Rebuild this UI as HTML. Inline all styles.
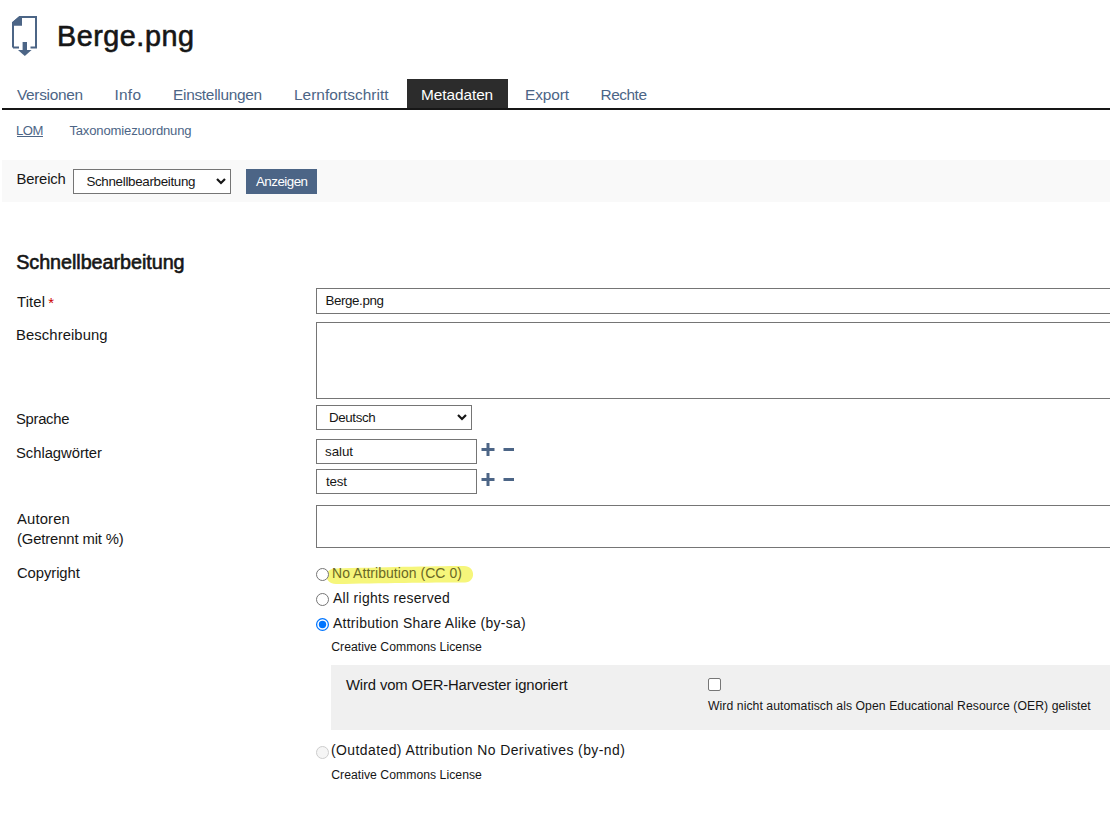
<!DOCTYPE html>
<html><head><meta charset="utf-8">
<style>
html,body{margin:0;padding:0;background:#fff;width:1110px;height:816px;overflow:hidden;position:relative;font-family:"Liberation Sans",sans-serif;}
.t{position:absolute;white-space:nowrap;line-height:40px;height:40px;}
.b{position:absolute;box-sizing:border-box;}
#h1{left:57.00px;top:15.72px;font-size:28.78px;letter-spacing:0.523px;font-weight:400;color:#161616}
#t1{left:17.00px;top:74.66px;font-size:15.41px;letter-spacing:-0.322px;font-weight:400;color:#4c6586}
#t2{left:114.40px;top:74.66px;font-size:15.41px;letter-spacing:0.288px;font-weight:400;color:#4c6586}
#t3{left:173.00px;top:74.66px;font-size:15.41px;letter-spacing:-0.278px;font-weight:400;color:#4c6586}
#t4{left:294.00px;top:74.66px;font-size:15.41px;letter-spacing:0.026px;font-weight:400;color:#4c6586}
#t5{left:421.00px;top:74.66px;font-size:15.41px;letter-spacing:-0.077px;font-weight:400;color:#ffffff}
#t6{left:525.00px;top:74.66px;font-size:15.41px;letter-spacing:-0.107px;font-weight:400;color:#4c6586}
#t7{left:600.60px;top:74.66px;font-size:15.41px;letter-spacing:-0.490px;font-weight:400;color:#4c6586}
#s1{left:16.00px;top:111.47px;font-size:13.08px;letter-spacing:-0.459px;font-weight:400;color:#4c6586}
#s2{left:69.40px;top:111.47px;font-size:13.08px;letter-spacing:-0.167px;font-weight:400;color:#4c6586}
#bereich{left:16.40px;top:159.26px;font-size:14.83px;letter-spacing:-0.146px;font-weight:400;color:#161616}
#selt{left:86.40px;top:162.36px;font-size:13.37px;letter-spacing:-0.309px;font-weight:400;color:#161616}
#btnt{left:256.00px;top:162.26px;font-size:13.37px;letter-spacing:-0.536px;font-weight:400;color:#ffffff}
#h2{left:16.20px;top:242.45px;font-size:19.77px;letter-spacing:-0.049px;font-weight:400;color:#161616}
#l1{left:17.00px;top:281.56px;font-size:14.83px;letter-spacing:0.141px;font-weight:400;color:#161616}
#ast{left:48.20px;top:282.56px;font-size:14.83px;letter-spacing:0.000px;font-weight:400;color:#cc0000}
#l2{left:16.00px;top:315.36px;font-size:14.83px;letter-spacing:0.083px;font-weight:400;color:#161616}
#l3{left:16.00px;top:398.56px;font-size:14.83px;letter-spacing:-0.307px;font-weight:400;color:#161616}
#l4{left:16.00px;top:432.56px;font-size:14.83px;letter-spacing:-0.048px;font-weight:400;color:#161616}
#l5{left:17.00px;top:498.76px;font-size:14.83px;letter-spacing:0.137px;font-weight:400;color:#161616}
#l6{left:17.00px;top:518.56px;font-size:14.83px;letter-spacing:-0.132px;font-weight:400;color:#161616}
#l7{left:17.00px;top:552.86px;font-size:14.83px;letter-spacing:-0.084px;font-weight:400;color:#161616}
#i1{left:325.40px;top:281.16px;font-size:13.37px;letter-spacing:-0.388px;font-weight:400;color:#161616}
#i2{left:329.00px;top:398.06px;font-size:13.37px;letter-spacing:-0.378px;font-weight:400;color:#161616}
#i3{left:325.00px;top:431.76px;font-size:13.37px;letter-spacing:-0.053px;font-weight:400;color:#161616}
#i4{left:326.00px;top:461.76px;font-size:13.37px;letter-spacing:-0.175px;font-weight:400;color:#161616}
#r1{left:332.00px;top:552.66px;font-size:13.95px;letter-spacing:0.066px;font-weight:400;color:#6a6825}
#r2{left:333.00px;top:578.16px;font-size:13.95px;letter-spacing:0.296px;font-weight:400;color:#161616}
#r3{left:333.00px;top:602.76px;font-size:13.95px;letter-spacing:0.275px;font-weight:400;color:#161616}
#c1{left:331.20px;top:626.57px;font-size:12.21px;letter-spacing:0.035px;font-weight:400;color:#161616}
#oer1{left:346.00px;top:665.06px;font-size:14.83px;letter-spacing:-0.135px;font-weight:400;color:#161616}
#oer2{left:708.00px;top:685.67px;font-size:12.21px;letter-spacing:0.065px;font-weight:400;color:#161616}
#r4{left:331.00px;top:730.46px;font-size:13.95px;letter-spacing:0.427px;font-weight:400;color:#161616}
#c2{left:331.20px;top:755.37px;font-size:12.21px;letter-spacing:0.035px;font-weight:400;color:#161616}
#h1,#h2{-webkit-text-stroke:0.6px #161616;}
</style></head><body>
<!-- header icon -->
<svg class="b" style="left:0;top:0" width="60" height="70" viewBox="0 0 60 70">
  <path d="M13 47.5 V22.8 L19.8 17 H36 V47.5 H30.5 M13 47.5 H19" fill="none" stroke="#4c6586" stroke-width="2"/>
  <path d="M12 22.5 L19.5 16 H22 V25.8 H12 Z" fill="#4c6586"/>
  <rect x="22.6" y="42" width="4.4" height="8" fill="#4c6586"/>
  <path d="M18 50 H31.6 L24.8 56 Z" fill="#4c6586"/>
</svg>
<!-- tabs -->
<div class="b" style="left:17px;top:136px;width:26px;height:1px;background:#4c6586"></div>
<div class="b" style="left:407px;top:79px;width:101px;height:30px;background:#2c2c2c"></div>
<div class="b" style="left:2px;top:108px;width:1108px;height:2px;background:#161616"></div>
<!-- filter bar -->
<div class="b" style="left:2px;top:160px;width:1108px;height:42px;background:#f9f9f9"></div>
<div class="b" style="left:73px;top:169px;width:158px;height:25px;background:#fff;border:1px solid #757575"></div>
<svg class="b" style="left:215px;top:177px" width="12" height="9" viewBox="0 0 12 9"><path d="M2 2 L6 6 L10 2" fill="none" stroke="#161616" stroke-width="2.2"/></svg>
<div class="b" style="left:246px;top:169px;width:71px;height:25px;background:#4c6586"></div>
<!-- form fields -->
<div class="b" style="left:316px;top:288px;width:820px;height:26px;border:1px solid #757575"></div>
<div class="b" style="left:316px;top:322px;width:820px;height:77px;border:1px solid #757575"></div>
<div class="b" style="left:316px;top:405px;width:156px;height:25px;border:1px solid #757575"></div>
<svg class="b" style="left:456px;top:413px" width="12" height="9" viewBox="0 0 12 9"><path d="M2 2 L6 6 L10 2" fill="none" stroke="#161616" stroke-width="2.2"/></svg>
<div class="b" style="left:316px;top:439px;width:161px;height:25px;border:1px solid #757575"></div>
<div class="b" style="left:316px;top:469px;width:161px;height:25px;border:1px solid #757575"></div>
<svg class="b" style="left:480px;top:442px" width="36" height="16"><path d="M1.5 7.5 H14.5 M8 1 V14 M23.5 7.5 H34" stroke="#4c6586" stroke-width="3"/></svg>
<svg class="b" style="left:480px;top:472px" width="36" height="16"><path d="M1.5 7.5 H14.5 M8 1 V14 M23.5 7.5 H34" stroke="#4c6586" stroke-width="3"/></svg>
<div class="b" style="left:316px;top:505px;width:820px;height:43px;border:1px solid #757575"></div>
<!-- copyright -->
<svg class="b" style="left:0;top:0" width="500" height="600" viewBox="0 0 500 600"><path d="M335 568.6 C380 567.2 430 566.2 464 566 C476 566 476 582.4 465 582.4 C430 582.4 380 583 336 584 C323.5 584 323.5 568.6 335 568.6 Z" fill="#f6f67b"/></svg>
<div class="b" style="left:316px;top:568px;width:13px;height:13px;border:1px solid #767676;border-radius:50%;background:#fff"></div>
<div class="b" style="left:316px;top:593px;width:13px;height:13px;border:1px solid #767676;border-radius:50%;background:#fff"></div>
<svg class="b" style="left:310px;top:612px" width="26" height="26" viewBox="0 0 26 26"><circle cx="12.5" cy="12.5" r="5.9" fill="#fff" stroke="#0075ff" stroke-width="1.25"/><circle cx="12.5" cy="12.5" r="3.7" fill="#0075ff"/></svg>
<div class="b" style="left:331px;top:665px;width:779px;height:65px;background:#f0f0f0"></div>
<div class="b" style="left:708px;top:678px;width:13px;height:13px;border:1px solid #767676;border-radius:2px;background:#fff"></div>
<div class="b" style="left:316px;top:746px;width:13px;height:13px;border:1px solid #cdcdcd;border-radius:50%;background:#f5f5f5"></div>
<div class="t" id="h1">Berge.png</div>
<div class="t" id="t1">Versionen</div>
<div class="t" id="t2">Info</div>
<div class="t" id="t3">Einstellungen</div>
<div class="t" id="t4">Lernfortschritt</div>
<div class="t" id="t5">Metadaten</div>
<div class="t" id="t6">Export</div>
<div class="t" id="t7">Rechte</div>
<div class="t" id="s1">LOM</div>
<div class="t" id="s2">Taxonomiezuordnung</div>
<div class="t" id="bereich">Bereich</div>
<div class="t" id="selt">Schnellbearbeitung</div>
<div class="t" id="btnt">Anzeigen</div>
<div class="t" id="h2">Schnellbearbeitung</div>
<div class="t" id="l1">Titel</div>
<div class="t" id="ast">*</div>
<div class="t" id="l2">Beschreibung</div>
<div class="t" id="l3">Sprache</div>
<div class="t" id="l4">Schlagwörter</div>
<div class="t" id="l5">Autoren</div>
<div class="t" id="l6">(Getrennt mit %)</div>
<div class="t" id="l7">Copyright</div>
<div class="t" id="i1">Berge.png</div>
<div class="t" id="i2">Deutsch</div>
<div class="t" id="i3">salut</div>
<div class="t" id="i4">test</div>
<div class="t" id="r1">No Attribution (CC 0)</div>
<div class="t" id="r2">All rights reserved</div>
<div class="t" id="r3">Attribution Share Alike (by-sa)</div>
<div class="t" id="c1">Creative Commons License</div>
<div class="t" id="oer1">Wird vom OER-Harvester ignoriert</div>
<div class="t" id="oer2">Wird nicht automatisch als Open Educational Resource (OER) gelistet</div>
<div class="t" id="r4">(Outdated) Attribution No Derivatives (by-nd)</div>
<div class="t" id="c2">Creative Commons License</div>
</body></html>
